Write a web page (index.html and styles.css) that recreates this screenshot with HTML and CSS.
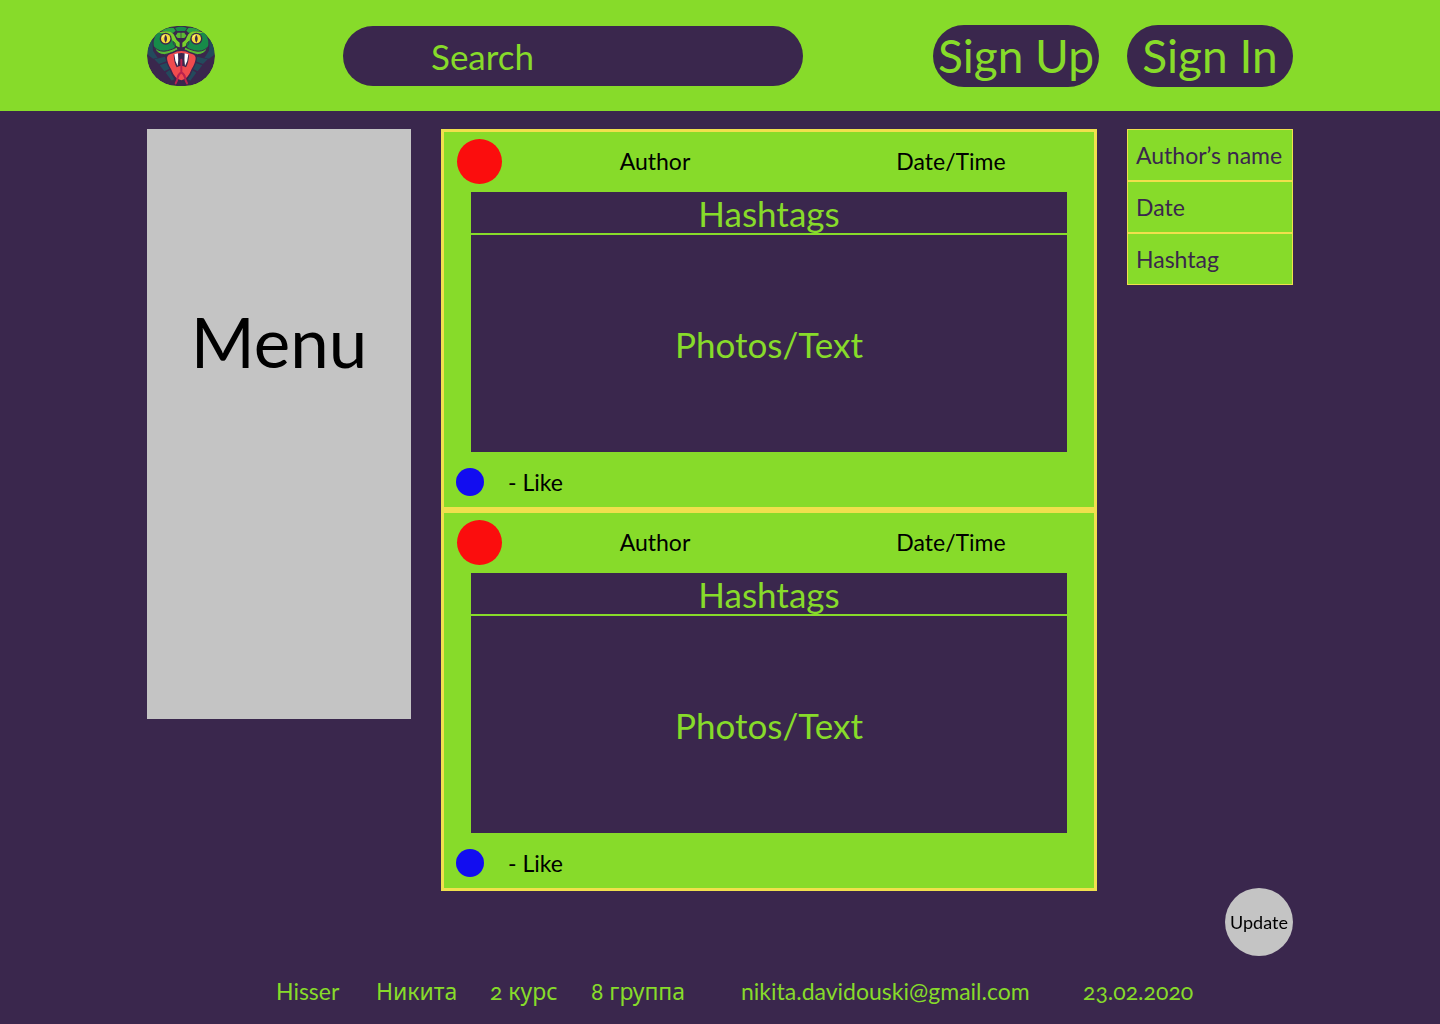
FILE: index.html
```html
<!DOCTYPE html>
<html lang="en">
<head>
<meta charset="utf-8">
<meta name="viewport" content="width=device-width, initial-scale=1">
<title>Hisser</title>
<link rel="stylesheet" href="styles.css">
</head>
<body>
<header class="topbar">
  <a class="logo" href="#" aria-label="Hisser home">
    <svg viewBox="0 0 204 180" aria-hidden="true">
      <rect width="204" height="180" rx="90" fill="#3a274d"/>
      <!-- scaled hood -->
      <path d="M16 38Q-2 62 4 88l14 10 14-2-14-22zM188 38q18 24 12 50l-14 10-14-2 14-22z" fill="#234a5c"/>
      <path d="M22 100l32-8 4 14-22 8zM38 118l22-8 8 18-16 8zM56 140l12-8 14 28-8 4zM182 100l-32-8-4 14 22 8zM166 118l-22-8-8 18 16 8zM148 140l-12-8-14 28 8 4z" fill="#234a5c"/>
      <!-- crown and brow scales -->
      <path d="M84 6q18-8 36 0l-6 9H90z" fill="#178b49"/>
      <path d="M44 14q18-11 36-8l6 8-8 7q-16-7-34-7zM160 14q-18-11-36-8l-6 8 8 7q16-7 34-7z" fill="#2aa343"/>
      <!-- eye sockets and cheeks -->
      <path d="M30 22Q12 48 24 68q14 12 38 8 16-4 22-14l-4-30Q60 10 30 22zM174 22q18 26 6 46-14 12-38 8-16-4-22-14l4-30q20-22 50-10z" fill="#178b49"/>
      <path d="M34 20q40-12 50 12 3 12 14 18v14q-16-2-22-22-8-20-42-22zM170 20q-40-12-50 12-3 12-14 18v14q16-2 22-22 8-20 42-22z" fill="#79d02b"/>
      <path d="M92 20h9v16h-9l-6-7zM112 20h-9v16h9l6-7z" fill="#5cbb34"/>
      <path d="M22 64q16 16 40 10 16-4 26-10l6 6q-16 14-42 16-22 0-30-22zM182 64q-16 16-40 10-16-4-26-10l-6 6q16 14 42 16 22 0 30-22z" fill="#58b936" stroke="#3a274d" stroke-width="3"/>
      <path d="M78 46q9 4 8 14-9-3-8-14zM126 46q-9 4-8 14 9-3 8-14z" fill="#178b49" stroke="#3a274d" stroke-width="2"/>
      <!-- eyes -->
      <circle cx="56" cy="38" r="18" fill="#3a274d"/>
      <circle cx="148" cy="38" r="18" fill="#3a274d"/>
      <circle cx="56" cy="38" r="14" fill="#f3dd3c"/>
      <circle cx="148" cy="38" r="14" fill="#f3dd3c"/>
      <path d="M56 26q8 12 0 24-8-12 0-24M148 26q8 12 0 24-8-12 0-24" fill="#3a274d"/>
      <path d="M46 35q2-6 6-7M138 35q2-6 6-7" stroke="#fff6a8" stroke-width="3" fill="none"/>
      <!-- mouth -->
      <path d="M56 94q2-12 20-16 12-8 27-8t27 8q18 4 20 16 0 16-12 36-12 36-35 38-23-2-35-38Q56 110 56 94z" fill="#3a274d"/>
      <path d="M60 95q2-10 18-13 11-7 25-7t25 7q16 3 18 13 0 14-12 34-12 32-31 34-19-2-31-34Q60 109 60 95z" fill="#f04b4e"/>
      <path d="M80 86q23-10 46 0-1 24-9 38-14-9-28 0-8-14-9-38z" fill="#3a274d"/>
      <path d="M82 85l11-3q2 22-1 38-9-15-10-35zM124 85l-11-3q-2 22 1 38 9-15 10-35z" fill="#fff"/>
      <path d="M103 101v38q-10 6-11 16-1 8-6 17M103 139q10 6 11 16 1 8 6 17" stroke="#b9224f" stroke-width="6" fill="none" stroke-linecap="round"/>
    </svg>
  </a>
  <input class="search" type="search" placeholder="Search" aria-label="Search">
  <div class="auth">
    <button class="pill" type="button">Sign Up</button>
    <button class="pill" type="button">Sign In</button>
  </div>
</header>

<main class="layout">
  <nav class="menu" aria-label="Main"><h1 class="menu-title">Menu</h1></nav>

  <section class="feed">
    <article class="post">
      <header class="post-head">
        <span class="avatar"></span>
        <span class="author">Author</span>
        <span class="date">Date/Time</span>
      </header>
      <div class="post-body">
        <p class="hashtags">Hashtags</p>
        <p class="content">Photos/Text</p>
      </div>
      <footer class="post-foot">
        <button class="like" type="button"><span class="like-dot"></span>- Like</button>
      </footer>
    </article>
    <article class="post">
      <header class="post-head">
        <span class="avatar"></span>
        <span class="author">Author</span>
        <span class="date">Date/Time</span>
      </header>
      <div class="post-body">
        <p class="hashtags">Hashtags</p>
        <p class="content">Photos/Text</p>
      </div>
      <footer class="post-foot">
        <button class="like" type="button"><span class="like-dot"></span>- Like</button>
      </footer>
    </article>
  </section>

  <aside class="filters" aria-label="Filters">
    <button class="filter" type="button">Author’s name</button>
    <button class="filter" type="button">Date</button>
    <button class="filter" type="button">Hashtag</button>
  </aside>
</main>

<footer class="site-foot">
  <span>Hisser</span>
  <span class="cyr" lang="ru">Никита</span>
  <span>2 <span class="cyr" lang="ru">курс</span></span>
  <span>8 <span class="cyr" lang="ru">группа</span></span>
  <a class="mail" href="mailto:nikita.davidouski@gmail.com">nikita.davidouski@gmail.com</a>
  <span>23.02.2020</span>
</footer>

<button class="update" type="button">Update</button>
</body>
</html>
```
FILE: styles.css
```css
:root {
  --green: #87db2a;
  --purple: #3a274d;
  --yellow: #f0e04d;
  --grey: #c4c4c4;
  --gutter: 147px;
}

* { box-sizing: border-box; }

body {
  margin: 0;
  min-height: 100vh;
  display: flex;
  flex-direction: column;
  background: var(--purple);
  color: #000;
  font-family: Lato, "Noto Sans", sans-serif;
  font-size: 23px;
  line-height: 32px;
  font-variant-numeric: oldstyle-nums;
}

button, input { font: inherit; }
button { border: 0; cursor: pointer; }
p, h1 { margin: 0; font-weight: 400; }

.topbar {
  display: flex;
  align-items: center;
  height: 111px;
  padding: 0 var(--gutter);
  background: var(--green);
}

.logo { width: 68px; height: 60px; border-radius: 30px; overflow: hidden; }
.logo svg { display: block; width: 100%; height: 100%; }

.search {
  flex: 1;
  min-width: 0;
  height: 60px;
  margin: 0 130px 0 128px;
  padding: 0 88px;
  border: 0;
  border-radius: 30px;
  background: var(--purple);
  color: var(--green);
  font-size: 35px;
  appearance: none;
}
.search::placeholder { color: var(--green); opacity: 1; }

.auth { display: flex; gap: 28px; }
.pill {
  width: 166px;
  height: 62px;
  padding: 0;
  border-radius: 31px;
  background: var(--purple);
  color: var(--green);
  font-size: 46px;
  white-space: nowrap;
}

.layout {
  display: grid;
  grid-template-columns: 264px 1fr 166px;
  align-items: start;
  gap: 30px;
  padding: 18px var(--gutter) 0;
}

.menu {
  min-height: 590px;
  padding-top: 170px;
  background: var(--grey);
  text-align: center;
}
.menu-title { font-size: 69px; line-height: 86px; }

.post { border: 3px solid var(--yellow); background: var(--green); }
.post-head {
  display: grid;
  grid-template-columns: 45px 1fr 1fr;
  align-items: center;
  height: 60px;
  padding: 0 0 2px 13px;
  text-align: center;
}
.author, .date { padding-left: 10px; }
.avatar { width: 45px; height: 45px; border-radius: 50%; background: #fb0d0d; }

.post-body { margin: 0 27px; background: var(--purple); color: var(--green); font-size: 35px; text-align: center; }
.hashtags { height: 43px; line-height: 42px; border-bottom: 2px solid var(--green); }
.content { display: grid; place-items: center; min-height: 217px; }

.post-foot { display: flex; align-items: center; height: 55px; padding: 4px 12px 0; }
.like { display: flex; align-items: center; gap: 24px; padding: 0; background: none; color: #000; }
.like-dot { width: 28px; height: 28px; border-radius: 50%; background: #120df0; }

.filters { border: 1px solid var(--yellow); }
.filter {
  display: block;
  width: 100%;
  height: 50px;
  padding: 0 8px;
  background: var(--green);
  color: var(--purple);
  text-align: left;
  white-space: nowrap;
}
.filter + .filter { height: 52px; border-top: 2px solid var(--yellow); }

.site-foot {
  display: grid;
  grid-template-columns: 100px 114px 101px 150px 342px auto;
  margin-top: auto;
  padding: 16px var(--gutter) 17px 276px;
  color: var(--green);
  white-space: nowrap;
}
.cyr { font-family: "Noto Sans", sans-serif; }
.mail { color: inherit; text-decoration: none; }

.update {
  position: fixed;
  right: var(--gutter);
  bottom: 68px;
  width: 68px;
  height: 68px;
  padding: 0;
  border-radius: 50%;
  background: var(--grey);
  color: #000;
  font-size: 18px;
}
```
